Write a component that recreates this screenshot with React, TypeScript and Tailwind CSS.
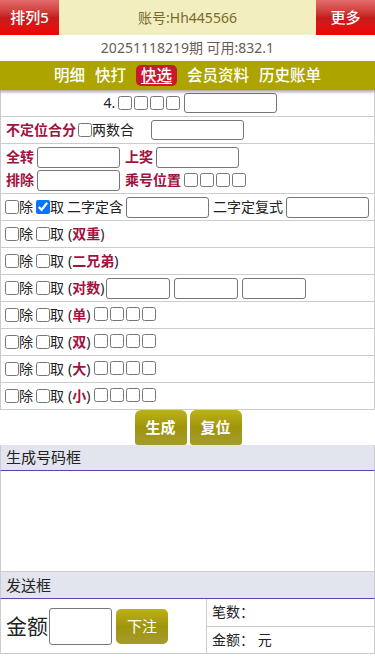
import React from 'react';

const redText = 'text-[#a3123f] font-bold';

const Cb = ({ checked = false, className = '' }: { checked?: boolean; className?: string }) => (
  <input
    type="checkbox"
    defaultChecked={checked}
    className={`m-0 w-[14px] h-[14px] shrink-0 ${className}`}
  />
);

const Cbs = ({ n = 4 }: { n?: number }) => (
  <span className="inline-flex items-center gap-[2px]">
    {Array.from({ length: n }).map((_, i) => (
      <Cb key={i} />
    ))}
  </span>
);

const Field = ({ w, h = 'h-[21px]' }: { w: string; h?: string }) => (
  <input type="text" className={`${w} ${h} border border-[#767676] rounded-[3px] bg-white px-1 outline-none`} />
);

const ChuQu = ({ label, children }: { label: string; children?: React.ReactNode }) => (
  <div className="flex items-center h-[27px] border-b border-[#ccc] pl-[4px]">
    <Cb />
    <span>除</span>
    <Cb className="ml-[3px]" />
    <span>取</span>
    <span className="ml-[4px]">(</span>
    <span className={redText}>{label}</span>
    <span>)</span>
    {children}
  </div>
);

const navItems = ['明细', '快打', '快选', '会员资料', '历史账单'];

export default function App() {
  return (
    <div
      className="w-[375px] min-h-[667px] bg-white text-[14px] text-[#222] leading-none"
      style={{ fontFamily: '"Noto Sans", "Noto Sans CJK SC", sans-serif' }}
    >
      {/* top bar */}
      <div className="flex h-[35px]">
        <div className="w-[59px] flex items-center justify-center text-white text-[15px] font-medium bg-gradient-to-b from-[#e26b6b] via-[#c51c1c] to-[#f20000]">
          排列5
        </div>
        <div className="flex-1 flex items-center justify-center bg-[#f2eec0] text-[#7a6a2c] text-[14px]">
          账号:Hh445566
        </div>
        <div className="w-[59px] flex items-center justify-center text-white text-[15px] font-medium bg-gradient-to-b from-[#e26b6b] via-[#c51c1c] to-[#f20000]">
          更多
        </div>
      </div>
      <div className="h-[26px] flex items-center justify-center text-[#6a5c52] text-[14px]">
        20251118219期 可用:832.1
      </div>
      <nav className="relative z-10 h-[29px] bg-[#ada400] flex items-center justify-center gap-[10px] text-white text-[15.5px] font-medium shadow-[0_2px_3px_rgba(0,0,0,0.35)]">
        {navItems.map((item) =>
          item === '快选' ? (
            <span key={item} className="bg-[#c8192f] rounded-[5px] px-[5px] py-[3px] underline underline-offset-2">
              {item}
            </span>
          ) : (
            <span key={item}>{item}</span>
          )
        )}
      </nav>

      {/* form table */}
      <div className="border-x border-[#ccc]">
        <div className="flex items-center justify-center h-[27px] border-b border-[#ccc] pl-[6px]">
          <span className="mr-[3px]">4.</span>
          <Cbs />
          <span className="ml-[4px]">
            <Field w="w-[93px]" h="h-[20px]" />
          </span>
        </div>
        <div className="flex items-center h-[27px] border-b border-[#ccc] pl-[5px]">
          <span className={redText}>不定位合分</span>
          <Cb className="ml-[2px]" />
          <span>两数合</span>
          <span className="ml-[17px]">
            <Field w="w-[93px]" h="h-[20px]" />
          </span>
        </div>
        <div className="flex flex-col justify-center gap-[2px] h-[50px] border-b border-[#ccc] pl-[5px]">
          <div className="flex items-center">
            <span className={`${redText} w-[31px]`}>全转</span>
            <Field w="w-[83px]" />
            <span className={`${redText} ml-[5px] w-[31px]`}>上奖</span>
            <Field w="w-[83px]" />
          </div>
          <div className="flex items-center">
            <span className={`${redText} w-[31px]`}>排除</span>
            <Field w="w-[83px]" />
            <span className={`${redText} ml-[5px] mr-[3px]`}>乘号位置</span>
            <Cbs />
          </div>
        </div>
        <div className="flex items-center h-[27px] border-b border-[#ccc] pl-[4px]">
          <Cb />
          <span>除</span>
          <Cb checked className="ml-[3px]" />
          <span>取</span>
          <span className="ml-[3px] mr-[3px]">二字定含</span>
          <Field w="w-[83px]" />
          <span className="ml-[4px] mr-[3px]">二字定复式</span>
          <Field w="w-[83px]" />
        </div>
        <ChuQu label="双重" />
        <ChuQu label="二兄弟" />
        <ChuQu label="对数">
          <span className="ml-[2px] flex gap-[4px]">
            <Field w="w-[64px]" />
            <Field w="w-[64px]" />
            <Field w="w-[64px]" />
          </span>
        </ChuQu>
        {['单', '双', '大', '小'].map((l) => (
          <ChuQu key={l} label={l}>
            <span className="ml-[4px]">
              <Cbs />
            </span>
          </ChuQu>
        ))}
      </div>

      <div className="flex justify-center gap-[3px] pl-[1px]">
        {['生成', '复位'].map((b) => (
          <button
            key={b}
            className="w-[52px] h-[35px] rounded-t-[6px] rounded-b-[3px] text-white text-[15px] font-bold bg-gradient-to-b from-[#bdb21a] via-[#9f9508] to-[#a59b2c]"
          >
            {b}
          </button>
        ))}
      </div>

      <div className="h-[26px] flex items-center pl-[5px] bg-[#e2e5ee] border-x border-[#ccc] border-b border-b-[#6b3cb0] text-[15px] text-[#222]">
        生成号码框
      </div>
      <div className="h-[101px] border-x border-b border-[#ccc]" />
      <div className="h-[27px] flex items-center pl-[5px] bg-[#e2e5ee] border-x border-[#ccc] border-b border-b-[#6b3cb0] text-[15px] text-[#222]">
        发送框
      </div>
      <div className="flex h-[55px] border-x border-b border-[#ccc]">
        <div className="w-[206px] flex items-center pl-[5px] border-r border-[#ccc]">
          <span className="text-[21px] mr-[1px]">金额</span>
          <Field w="w-[63px]" h="h-[37px]" />
          <button className="ml-[4px] w-[52px] h-[35px] rounded-[5px] text-white text-[15px] bg-gradient-to-b from-[#bdb21a] via-[#9f9508] to-[#a59b2c]">
            下注
          </button>
        </div>
        <div className="flex-1 flex flex-col">
          <div className="flex-1 flex items-center pl-[5px] border-b border-[#ccc]">笔数：</div>
          <div className="flex-1 flex items-center pl-[5px]">金额： 元</div>
        </div>
      </div>
    </div>
  );
}
